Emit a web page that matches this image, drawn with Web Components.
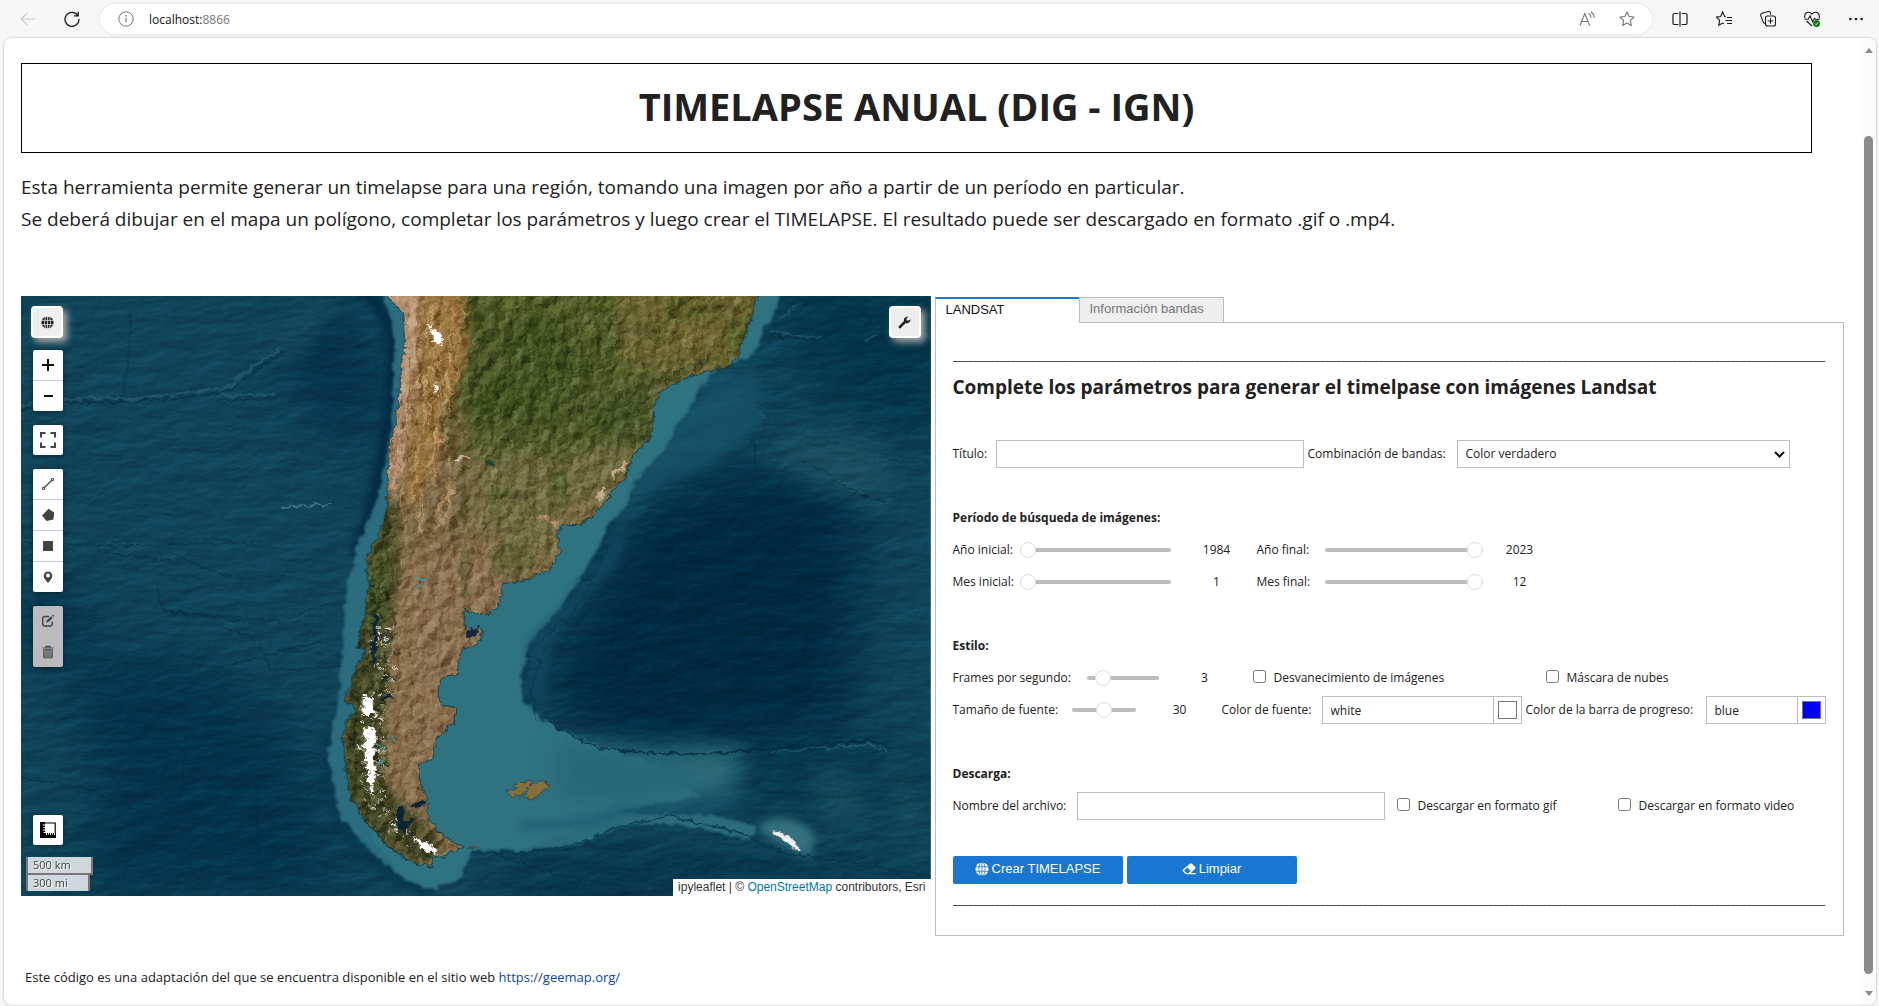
<!DOCTYPE html>
<html lang="es">
<head>
<meta charset="utf-8">
<title>Timelapse anual</title>
<style>
html,body{height:100%;margin:0}
body{background:#f7f7f7;font-family:"Open Sans","Noto Sans",sans-serif;font-size:12px;color:#212121;overflow:hidden}
</style>
</head>
<body>
<timelapse-app></timelapse-app>
<script>
const define = (name, html) => customElements.define(name, class extends HTMLElement {
  constructor() {
    super();
    this.attachShadow({ mode: "open" });
  }
  connectedCallback() {
    if (this.shadowRoot.childNodes.length) return;
    this.shadowRoot.innerHTML = "<style>*{box-sizing:border-box}:host{box-sizing:border-box}</style>" +
      (typeof html === "function" ? html(this) : html);
  }
});
const attr = (el, name, fallback = "") => el.getAttribute(name) ?? fallback;

/* ---------- icons ---------- */
const icons = {
  back: `<path d="M15 8H1.5M7.5 1.8 1.3 8l6.2 6.2" fill="none" stroke="currentColor" stroke-width="1.1"/>`,
  reload: `<path d="M13.6 4.2A7 7 0 1 0 15 8M14.2.8v4H10" fill="none" stroke="currentColor" stroke-width="1.3"/>`,
  info: `<circle cx="8" cy="8" r="7.2" fill="none" stroke="currentColor"/><path d="M8 7v4.6" stroke="currentColor" stroke-width="1.2"/><circle cx="8" cy="4.8" r=".9" fill="currentColor"/>`,
  aloud: `<path d="M1 14.5 5.8 2.5l4.8 12M2.8 10.5h6M9.5 2.2q2.4 1.7 2.6 4.6M11.8.7q3.2 2.1 3.4 6.1" fill="none" stroke="currentColor" stroke-width="1.1"/>`,
  star: `<path d="m8 1 2.1 4.5 4.9.6-3.6 3.4.9 4.9L8 12l-4.3 2.4.9-4.9L1 6.1l4.9-.6z" fill="none" stroke="currentColor" stroke-width="1.1" stroke-linejoin="round"/>`,
  split: `<path d="M6.3 2.5H2.6Q1 2.5 1 4.1v7.8q0 1.6 1.6 1.6h3.7M9.7 2.5h3.7Q15 2.5 15 4.1v7.8q0 1.6-1.6 1.6H9.7M8 .5v15" fill="none" stroke="currentColor" stroke-width="1.2"/>`,
  favs: `<path d="M10 5.8 8.7 5.600 6.7 1 4.600 5.500.4 6.100l3.200 3.100-.8 5.100 3.900-2.200 1.200.700M11 6.500h5M9.500 9.500H16M11 12.500h5" fill="none" stroke="currentColor" stroke-width="1.1"/>`,
  collections: `<path d="M5 12.500q-1.500-.3-1.900-1.600L.8 4.600Q.4 2.900 2 2.300L8.300.5q1.600-.3 2.100 1.200l.6 2" fill="none" stroke="currentColor" stroke-width="1.1"/><rect x="5.500" y="5" width="10" height="10" rx="2" fill="none" stroke="currentColor" stroke-width="1.1"/><path d="M10.500 7.200v5.600M7.700 10h5.600" stroke="currentColor"/>`,
  heart: `<path d="M1 7.200Q-.2 3.500 2.500 1.800 5.600.3 8 3.200 10.400.3 13.500 1.800 16.200 3.500 15 7.200M.500 8.300h3.700L6 4.800l2.500 6 2-3.500 1 1H16M2.500 10 8 15" fill="none" stroke="currentColor" stroke-width="1.1"/><circle cx="12.500" cy="12.500" r="3.500" fill="#107c10"/><path d="m11 12.600 1.100 1.100 2-2.200" fill="none" stroke="#fff" stroke-width=".9"/>`,
  dots: `<g fill="currentColor"><circle cx="2.400" cy="8" r="1.300"/><circle cx="8" cy="8" r="1.300"/><circle cx="13.600" cy="8" r="1.300"/></g>`,
  globe: `<circle cx="8" cy="8" r="7.500" fill="currentColor"/><g fill="none" stroke="var(--cut,#eee)" stroke-width=".9"><ellipse cx="8" cy="8" rx="3.600" ry="8"/><path d="M8 0v16M0 5.400h16M0 10.600h16"/></g>`,
  wrench: `<path d="M15.300 4.100a4.200 4.200 0 0 1-5.600 4.500l-6 6a1.700 1.700 0 0 1-2.500-2.400l6.200-5.900A4.200 4.200 0 0 1 12.600 1L10.300 3.300l.4 2 2.100.4z" fill="currentColor"/>`,
  plus: `<path d="M8 2v12M2 8h12" stroke="currentColor" stroke-width="2"/>`,
  minus: `<path d="M4 8h9" stroke="currentColor" stroke-width="2"/>`,
  full: `<path d="M1 5.500V1h4.500M10.500 1H15v4.500M15 10.500V15h-4.500M5.500 15H1v-4.500" fill="none" stroke="currentColor" stroke-width="2"/>`,
  line: `<path d="m4 12 8-8" stroke="currentColor" stroke-width="1.300"/><path d="M2.500 11.500h2v2h-2zM11.500 2.500h2v2h-2z" fill="#fff" stroke="currentColor"/>`,
  polygon: `<path d="m8.500 1.800 5.700 3.600-.8 7-6.900 1.700L2 8.500z" fill="currentColor"/>`,
  square: `<path d="M3 3h10v10H3z" fill="currentColor"/>`,
  marker: `<path d="M8 2.500a4.300 4.300 0 0 0-4.300 4.300C3.700 9.500 6 11.500 8 14c2-2.500 4.300-4.500 4.300-7.200A4.300 4.300 0 0 0 8 2.500z" fill="currentColor"/><circle cx="8" cy="6.500" r="1.900" fill="#fff"/>`,
  edit: `<path d="M9 3.500H5Q2.700 3.500 2.700 5.800v5Q2.700 13 5 13h5q2.300 0 2.300-2.300V8.500" fill="none" stroke="currentColor" stroke-width="1.400"/><path d="m6 9.900.7-2.500 4.300-4.200 1.700 1.700-4.300 4.200zM12 2.400l.9-.9 1.400 1.500-.9.900z" fill="currentColor"/>`,
  trash: `<path d="M2.500 4h11M6 3.700V2.300h4v1.400" stroke="currentColor" fill="none" stroke-width="1.200"/><path d="M3.500 5.500h9v8.500h-9z" fill="#777" stroke="#555" stroke-width=".8"/>`,
  ruler: `<path d="M0 0h5v11h11v5H0z" fill="currentColor"/><path d="M4.500 1h10.700v10.500" fill="none" stroke="currentColor" stroke-width="1.200"/><path d="M5 3H2.800M5 5.500H3.500M5 8H2.800M5 10.500H3.500M6.500 11v2M8.500 11v1.500M10.500 11v2M12.500 11v1.500M14.500 11v2" stroke="#fff" stroke-width="1"/>`,
  eraser: `<path fill-rule="evenodd" d="M9.200 1.800q.9-.8 1.800 0l4.200 3.900q.8.900 0 1.800L10 12.500h6V14H4.600L.9 10.500q-.8-.9 0-1.700zM6 6.400 2.400 9.700l2.900 2.800h2.400l2.100-2.200z" fill="currentColor"/>`
};
define("ui-icon", el => `<style>:host{display:block;flex:none;width:var(--icon,16px);height:var(--icon,16px)}svg{display:block;width:100%;height:100%}</style><svg viewBox="0 0 16 16" aria-hidden="true">${icons[attr(el, "name")]}</svg>`);

/* ---------- browser frame ---------- */
define("browser-bar", `<style>
:host{display:flex;align-items:center;height:38px;padding:0 15px 0 20px}
button{all:unset;display:flex;color:#1b1b1b}
button[disabled]{color:#c8c8c8}
.reload{margin:0 20px 0 28px}
.address{flex:1;display:flex;align-items:center;height:30px;border-radius:15px;background:#fff;padding:0 17px 0 18px;box-shadow:0 0 3px #0002;color:#777}
.url{flex:1;margin-left:15px}.url b{font-weight:400;color:#111}
.tools{display:flex;gap:24px;align-items:center}
.side{display:flex;gap:28px;margin-left:20px}
.address button{color:#777}
</style>
<button disabled aria-label="Atrás"><ui-icon name="back"></ui-icon></button>
<button class="reload" aria-label="Actualizar"><ui-icon name="reload"></ui-icon></button>
<div class="address"><ui-icon name="info"></ui-icon><span class="url"><b>localhost:</b>8866</span>
<div class="tools"><button aria-label="Leer en voz alta"><ui-icon name="aloud"></ui-icon></button><button aria-label="Favorito"><ui-icon name="star"></ui-icon></button></div></div>
<div class="side"><button aria-label="Pantalla dividida"><ui-icon name="split"></ui-icon></button><button aria-label="Favoritos"><ui-icon name="favs"></ui-icon></button><button aria-label="Colecciones"><ui-icon name="collections"></ui-icon></button><button aria-label="Rendimiento"><ui-icon name="heart"></ui-icon></button><button aria-label="Más"><ui-icon name="dots"></ui-icon></button></div>`);

define("page-scrollbar", `<style>
:host{display:flex;flex-direction:column;align-items:center;width:15px;flex:none;background:#fcfcfc;padding:10px 0 9px;border-radius:0 8px 8px 0}
i{width:0;height:0;border:4px solid transparent}
.up{border-bottom:5px solid #8b8b8b;border-top:0}.down{border-top:5px solid #8b8b8b;border-bottom:0}
.rail{flex:1;width:9px;padding:83px 0 17px;display:flex}
.thumb{flex:1;border-radius:5px;background:#8b8b8b}
</style><i class="up"></i><div class="rail"><div class="thumb"></div></div><i class="down"></i>`);

/* ---------- map ---------- */
const land = "M366-20V0L382 16 385 51 381 74 379 94 376 127 369 147 368 171 367 211 359 237 346 261 348 291 344 317 337 351 346 354 336 371 324 404 332 409 336 416 326 424 322 447 327 484 332 504 346 527 369 551 389 564 412 571 409 561 422 560 436 554 442 550 426 544 409 526 406 504 398 484 398 469 412 461 413 452 415 444 424 434 434 427 434 412 422 411 415 396 421 382 436 377 437 364 441 354 459 344 460 332 450 333 444 336 442 312 454 317 464 318 476 312 480 300 481 288 506 283 527 275 534 264 539 255 536 237 542 228 559 228 572 221 586 201 606 178 612 158 629 142 632 130 632 111 638 98 649 89 672 79 706 71 717 59 722 45 732 16 737 0V-20Z";
const shelfEast = "M725-20 759-20 759 0 754 15 752 24 742 30 738 50 729 63 705 68 679 91 668 115 655 130 648 150 619 178 606 209 590 225 572 261 539 312 506 352 501 380 501 403 522 423 540 434 566 445 640 470 680 500 600 515 556 548 500 556 472 553 450 556 440 580 432 585 412 594 379 581 350 540 380 300 520 180Z";
const shelfWest = "M355 -23 367 16 374 44 370 134 358 201 339 244 327 284 322 337 319 397 312 431 307 461 319 521 346 551 379 581 412 594 432 561 420 480 380 300 395 60 385 -23Z";
const spots = (n, seed, x, y, w, h, draw) => {
  let s = seed, out = "";
  const rnd = () => (s = (s * 16807) % 2147483647) / 2147483647;
  for (let i = 0; i < n; i++) out += draw(x + rnd() * w, y + rnd() * h, rnd(), rnd());
  return out;
};
const ridges = spots(80, 91, 0, 130, 300, 460, (x, y, a, b) => `M${x | 0} ${y | 0}q${6 + a * 14 | 0} ${b * 8 - 4 | 0} ${14 + a * 30 | 0} ${b * 12 - 9 | 0}`);
const ridgesEast = spots(50, 37, 740, 10, 165, 560, (x, y, a, b) => `M${x | 0} ${y | 0}q${6 + a * 14 | 0} ${b * 6 - 3 | 0} ${14 + a * 30 | 0} ${b * 6 - 3 | 0}`);
const andesAt = (x, y, a, b) => { const k = x - y * .1; return `M${k | 0} ${y | 0}q${b * 10 - 8 | 0} ${8 + a * 8 | 0} ${b * 8 - 6 | 0} ${18 + a * 18 | 0}`; };
const andes = spots(70, 77, 388, 0, 62, 210, andesAt);
const andesLight = spots(60, 19, 390, 0, 60, 210, andesAt);
const spine = y => y < 400 ? 362 : y < 500 ? 352 : 352 + (y - 500) * .7;
const dab = spread => (x, y, a, b) => `<circle cx="${(spine(y) + (a - .5) * spread) | 0}" cy="${y | 0}" r="${(.4 + b * .9).toFixed(1)}"/>`;
const snow = spots(220, 53, 0, 320, 1, 235, dab(24));
const forest = spots(420, 29, 0, 290, 1, 272, (x, y, a, b) => `<circle cx="${(spine(y) - 5 + (a - .5) * 38) | 0}" cy="${y | 0}" r="${(.8 + b * 1.8).toFixed(1)}"/>`);

define("satellite-image", `<style>:host{display:block;height:100%}svg{display:block;width:100%;height:100%}filter{color-interpolation-filters:sRGB}</style>
<svg viewBox="0 0 910 600" preserveAspectRatio="xMidYMid slice" role="img" aria-label="Imagen satelital del sur de Sudamérica">
<defs>
<clipPath id="land"><path d="${land}"/></clipPath>
<filter id="b1" x="-30%" y="-30%" width="160%" height="160%"><feGaussianBlur stdDeviation="1"/></filter>
<filter id="b5" x="-30%" y="-30%" width="160%" height="160%"><feGaussianBlur stdDeviation="4"/></filter>
<filter id="b14" x="-50%" y="-50%" width="200%" height="200%"><feGaussianBlur stdDeviation="12"/></filter>
<filter id="b30" x="-50%" y="-50%" width="200%" height="200%"><feGaussianBlur stdDeviation="26"/></filter>
<filter id="rough" x="-10%" y="-10%" width="120%" height="120%"><feTurbulence type="fractalNoise" baseFrequency=".12" numOctaves="3" seed="4"/><feDisplacementMap in="SourceGraphic" scale="8" xChannelSelector="R" yChannelSelector="G"/></filter>
<filter id="coast" x="-2%" y="-2%" width="104%" height="104%"><feTurbulence type="fractalNoise" baseFrequency=".15" numOctaves="3" seed="14"/><feDisplacementMap in="SourceGraphic" scale="7" xChannelSelector="R" yChannelSelector="G"/></filter>
<filter id="jag" x="-10%" y="-10%" width="120%" height="120%"><feTurbulence type="fractalNoise" baseFrequency=".3" numOctaves="2" seed="9"/><feDisplacementMap in="SourceGraphic" scale="9" xChannelSelector="R" yChannelSelector="G"/></filter>
<filter id="sea" x="0" y="0" width="100%" height="100%"><feTurbulence type="fractalNoise" baseFrequency=".025 .06" numOctaves="5" seed="12"/><feDiffuseLighting surfaceScale="1.500" lighting-color="#fff"><feDistantLight azimuth="225" elevation="30"/></feDiffuseLighting></filter>
<filter id="ground" x="0" y="0" width="100%" height="100%"><feTurbulence type="fractalNoise" baseFrequency=".09 .07" numOctaves="5" seed="21"/><feDiffuseLighting surfaceScale="2.500" lighting-color="#fff"><feDistantLight azimuth="225" elevation="30"/></feDiffuseLighting></filter>
<filter id="mottle" x="0" y="0" width="100%" height="100%"><feTurbulence type="fractalNoise" baseFrequency=".02 .024" numOctaves="5" seed="7"/><feColorMatrix values="0 0 0 0 .22  0 0 0 0 .30  0 0 0 0 .08  0 4 0 0 -1.800"/></filter>
</defs>
<rect width="910" height="600" fill="#0f4459"/>
<g filter="url(#b30)">
<path d="M40 370 160 360 260 420 290 500 330 600 60 600 80 480Z" fill="#013049" opacity=".85"/>
<path d="M260 20 350 30 355 160 290 120Z" fill="#033049"/>
<path d="M0 290 70 310 60 360 0 350Z" fill="#03314a"/>
<path d="M740-20H930V150L800 110Z" fill="#03354a"/>
<path d="M700 170 840 180 830 440 560 440 530 390 600 240Z" fill="#002c44"/>
<path d="M620 205 760 200 820 300 800 430 720 450 620 455 540 430 525 370 590 280Z" fill="#002a41"/>
<path d="M730 460 910 460 910 530 820 520 730 530Z" fill="#06394d"/>
<path d="M480 575 600 550 920 590 920 620 470 620Z" fill="#06344a"/>
</g>
<g filter="url(#b14)">
<path d="M740 160q60-45 120-10 25 35 0 60-60-10-120-50" fill="#1b5363" opacity=".8"/>
<path d="M795 465q40 10 60 60l-40 10q-25-30-20-70M860 460q40 20 45 90l-20-5Z" fill="#1a5262" opacity=".7"/>
<path d="M640 90 720 75 730 130 650 170 600 230 580 240Z" fill="#165065"/>
<path d="M235 50 300 0 320 0 270 60Z" fill="#1b5164" opacity=".7"/>
<path d="M560 450 720 455 710 500 620 515 540 530Z" fill="#236473"/>
</g>
<rect width="910" height="600" filter="url(#sea)" style="mix-blend-mode:soft-light" opacity=".55"/>
<g filter="url(#rough)" fill="none" stroke-linecap="round">
<path d="M0 110Q50 100 110 102L160 98 205 92 260 52M195 100 252 98M215 82q25-18 42-26" stroke="#2b6070" stroke-width="2" opacity=".7"/>
<path d="M0 114Q50 104 110 106L160 102 205 96 262 56M195 105 252 102" stroke="#03283a" stroke-width="1.500" opacity=".6"/>
<path d="M110 16 108 60 103 98M0 246 100 250 240 246M75 250 80 256 150 265M150 256 180 270 210 282M136 290 142 315 255 325 320 305M150 316 220 325M40 318 70 322M200 330 238 345 250 375 320 370M140 370 200 371 300 345M165 440 160 500M235 480 238 560M0 483 60 490 90 505M125 520 95 560" stroke="#03293d" stroke-width="1" opacity=".6"/>
<path d="M262 212 310 208" stroke="#3b7480" stroke-width="2"/>
<path d="${ridges}" stroke="#062f43" stroke-width="1" opacity=".4"/>
<path d="${ridgesEast}" stroke="#052e42" stroke-width="1" opacity=".4"/>
<path d="M750 38 770 42 800 44M820 187 840 199 865 205M780 165 810 178M705 124 728 120 745 108M733 140 735 175" stroke="#032d40" stroke-width="1" opacity=".8"/>
<path d="M750 35 770 39 800 41M845 44 855 40M818 185 842 198M730 110 745 122M760 22 778 8" stroke="#286270" stroke-width="1.500" opacity=".7"/>
</g>
<path d="M330-20Q366 14 372 40 374 90 364 150 352 220 334 260" fill="none" stroke="#022942" stroke-width="12" filter="url(#b5)"/>
<path d="M310 440Q308 520 345 560L412 600" fill="none" stroke="#04344b" stroke-width="15" filter="url(#b5)" opacity=".6"/>
<g filter="url(#b1)"><g filter="url(#rough)">
<path d="${shelfWest}" fill="#2b6c7e"/>
<path d="${shelfEast}" fill="#2f7280"/>
<path d="M500 556Q560 530 600 516L700 520 735 532 730 545Q660 522 600 530L556 550Z" fill="#2b6b7b"/>
</g></g>
<g filter="url(#b14)">
<path d="M540 445 620 462 715 458 695 495 600 505 540 500Z" fill="#266777"/>
<path d="M640 462 720 460 700 490Z" fill="#2f6b78"/>
</g>
<g filter="url(#b5)">
<path d="M500 529Q560 532 600 514L720 510" fill="none" stroke="#12506a" stroke-width="6" opacity=".7"/>
<path d="M745 525q30-10 50 15l-5 22q-30-10-55-30Z" fill="#34707d"/>
<path d="M508 345 545 308 580 262 606 222 600 262 560 310 530 350 524 410 508 405Z" fill="#124a60" opacity=".75"/>
<path d="M610 200 640 165 665 130 690 95 735 70 740 130 690 170Z" fill="#175166" opacity=".7"/>
</g>
<g fill="none" filter="url(#rough)">
<path d="M524 423Q560 450 600 455 680 462 740 453L850 445 870 452" stroke="#02273b" stroke-width="1.500" opacity=".8"/>
<path d="M750 456 850 448 865 456" stroke="#2b6873" stroke-width="1.500" opacity=".7"/>
<path d="M452 556Q550 562 590 532L650 520 720 537 760 557 800 562 870 572 905 602M480 560 540 580 600 590M640 570 700 560" stroke="#04344a" stroke-width="1.500" opacity=".8"/>
<path d="M505 380 510 355 545 320M508 400 520 360 560 305 590 245M515 425 510 390M504 360 520 365M508 372 526 372M540 325 556 322M560 285 575 280" stroke="#072f42" stroke-width="1" opacity=".6"/>
</g>
<g filter="url(#coast)">
<path d="${land}" fill="#1b3034" stroke="#153d46" stroke-width="2"/>
<g clip-path="url(#land)">
<path d="${land}" fill="#88704a"/>
<g filter="url(#b14)">
<path d="M440-30H770L720 80 640 90 630 150 540 160 450 180 440 120Z" fill="#57602a"/>
<path d="M445 30 530 10 580 60 560 130 450 160Z" fill="#465423"/>
<path d="M600-30 770-30 700 75 600 70Z" fill="#6e6531"/>
<path d="M570 100 640 80 640 150 580 160Z" fill="#47552a"/>
<path d="M455 150 610 150 600 200 540 220 540 260 480 280 450 220Z" fill="#6f6b3e"/>
<path d="M400 180 455 165 460 260 390 290Z" fill="#776541"/>
<path d="M372 270 470 240 520 290 450 340 410 560 370 400Z" fill="#8a6f50"/>
</g>
<g filter="url(#b5)">
<path d="M360-15 400-15 395 60 385 170 365 215 362 140Z" fill="#b89373"/>
<path d="M400-15 450-15 448 60 430 120 405 190 385 210 397 100Z" fill="#9a773f"/>
<path d="M446-10Q462 30 448 75L425 130 436 165" fill="none" stroke="#36491c" stroke-width="7"/>
<path d="M362 205 378 200 378 280 368 345 365 420 358 520 320 540 320 430 345 250Z" fill="#494a25"/>
<path d="M355 480 380 500 426 550 400 570 340 530Z" fill="#4b4b26"/>
<path d="M346 270 360 262 362 330 348 330Z" fill="#4f5e2d"/>
<path d="M376 500 400 500 406 522 385 512Z" fill="#8a7152"/>
</g>
<rect x="440" width="300" height="300" filter="url(#mottle)" opacity=".4"/>
<g filter="url(#jag)" fill="#2b371b" opacity=".75">${forest}</g>
<g filter="url(#rough)" fill="none">
<path d="${andes}" stroke="#6c4825" stroke-width="1.500" opacity=".55"/>
<path d="${andesLight}" stroke="#d4ad7d" stroke-width="1.500" opacity=".6"/>
<path d="M495 192 518 218 538 230M575 50 605 35 640 45M470 215 490 190M600 45 570 80M520 150 512 185" stroke="#384728" stroke-width="1.200" opacity=".6"/>
<path d="M516 219 526 222 538 230" stroke="#aa8862" stroke-width="4"/>
<path d="M465 166 474 169" stroke="#2a5943" stroke-width="6"/>
<path d="M435 165 447 160M592 182 606 167M578 203 585 192" stroke="#c6a98d" stroke-width="4"/>
<path d="M400 235 410 250M398 310 395 340M410 400 400 430M400 395 430 415M365 465 410 462M392 370 404 360M400 440 390 452" stroke="#a78765" stroke-width="1.500" opacity=".7"/>
<path d="M630 88 690 62M645 85 660 78" stroke="#37441f" stroke-width="3" opacity=".7"/>
</g>
<rect width="910" height="600" filter="url(#ground)" style="mix-blend-mode:soft-light" opacity=".8"/>
<g filter="url(#jag)" fill="#fff">
<path d="M343 400h9l1 20h-11ZM343 432h11l-1 25 2 20-4 24-6-32Z"/>
<path d="M405 24l8 10 8 4 1 10-9-2ZM413 88l6 4-3 8ZM391 541l12 4 14 8-2 4-14-4Z"/>
<g opacity=".8">${snow}</g>
</g>
<g fill="#0b2435"><path d="M353 318l4 2-3 50-3-4ZM357 403l10-4 7 3-8 1ZM377 512l6-2-1 16 12-4-6 8-4 8-7-6ZM390 508l14-4 2 6-14 2Z"/></g>
<path d="M355 448l9 5M356 467l8-1M371 441l3 4M395 281l11 4M396 292l5-4" stroke="#3f9ba1" stroke-width="2"/>
</g>
<path d="M445 339 450 334 457 332 457 338 450 343Z" fill="#14273a"/>
</g>
<g filter="url(#coast)" fill="#85703c" stroke="#2d4038" stroke-width=".8"><path d="M486 494l7 1 4-8 12-2 2 5-8 5-3 5-8 1ZM503 502l8-14 10-3 8 3-2 5-10 5-5 6Z"/><path d="M447 552l9-2 2 2Z"/></g>
<path d="M753 535l12 3 10 8 4 8-6-1-7-7-13-8Z" fill="#eee" filter="url(#coast)"/>
</svg>`);

define("map-group", el => `<style>
:host{display:flex;flex-direction:column;width:30px;border-radius:2px;overflow:hidden;background:${el.hasAttribute("off") ? "#bbb" : "#fff"};box-shadow:0 1px 5px #0006}
</style><slot></slot>`);
define("map-button", el => `<style>
:host{display:block}:host(:not(:last-child)){border-bottom:1px solid ${el.hasAttribute("off") ? "#bbb" : "#ccc"}}
button{display:flex;align-items:center;justify-content:center;width:30px;height:30px;padding:0;border:0;background:none;color:${attr(el, "tone", "#444")}}
</style><button aria-label="${attr(el, "label")}" ${el.hasAttribute("off") ? "disabled" : ""}><ui-icon name="${attr(el, "icon")}"></ui-icon></button>`);
define("tool-toggle", el => `<style>:host{display:block}
button{display:flex;align-items:center;justify-content:center;width:32px;height:32px;padding:0;border:2px solid #fff;border-radius:4px;background:#eee;color:#212121;box-shadow:4px 4px 7px #aaa}
ui-icon{--icon:13px}</style><button aria-label="${attr(el, "label")}"><ui-icon name="${attr(el, "icon")}"></ui-icon></button>`);

define("leaflet-map", `<style>
:host{display:block;position:relative;height:600px;flex:1;min-width:0;overflow:hidden}
.corner{position:absolute;display:flex;flex-direction:column;align-items:flex-start}
.tl{top:10px;left:10px;gap:12px}.tl map-group{margin-left:2px}.tl map-group+map-group{margin-top:2px}
.tr{top:10px;right:10px}.bl{left:5px;bottom:5px;gap:12px}.bl map-group{margin-left:7px}.br{right:0;bottom:0}
.scale div{width:67px;height:18px;padding:1px 5px;font:11px/14px "Open Sans","Noto Sans",sans-serif;color:#444;background:#fffc;border:2px solid #777;border-top:0;text-shadow:1px 1px #fff}
.scale div+div{width:64px;height:16px;border-bottom:0}
.credit{height:17px;background:#fff;padding:0 5px;font:12px/17px "Liberation Sans",Arial,sans-serif;color:#333;white-space:nowrap}
a{color:#0078a8;text-decoration:none}
</style>
<satellite-image></satellite-image>
<div class="corner tl"><tool-toggle icon="globe" label="Buscar"></tool-toggle>
<map-group><map-button icon="plus" label="Acercar" tone="#111"></map-button><map-button icon="minus" label="Alejar" tone="#111"></map-button></map-group>
<map-group><map-button icon="full" label="Pantalla completa"></map-button></map-group>
<map-group><map-button icon="line" label="Línea"></map-button><map-button icon="polygon" label="Polígono"></map-button><map-button icon="square" label="Rectángulo"></map-button><map-button icon="marker" label="Marcador"></map-button></map-group>
<map-group off><map-button off icon="edit" label="Editar"></map-button><map-button off icon="trash" label="Borrar"></map-button></map-group></div>
<div class="corner tr"><tool-toggle icon="wrench" label="Herramientas"></tool-toggle></div>
<div class="corner bl"><map-group><map-button icon="ruler" label="Medir" tone="#000"></map-button></map-group><div class="scale"><div>500 km</div><div>300 mi</div></div></div>
<div class="corner br"><div class="credit">ipyleaflet | © <a href="#osm">OpenStreetMap</a> contributors, Esri</div></div>`);

/* ---------- form widgets ---------- */
const field = `:host{display:flex;align-items:center;height:28px;font-size:12px;line-height:28px;white-space:nowrap}
label{flex:none;width:var(--label,auto)}
input,select{font:inherit;color:inherit;margin:0}
.box{width:var(--box,auto);min-width:0;height:28px;border:1px solid #bdbdbd;border-radius:0;background:#fff;padding:0 8px;outline:0;line-height:24px}`;
define("text-field", el => `<style>${field}</style><label for="f">${attr(el, "label")}</label><input id="f" class="box" type="text">`);
define("select-field", el => `<style>${field}
.wrap{display:grid;align-items:center;width:var(--box)}.wrap>*{grid-area:1/1}
select{appearance:none;width:100%}svg{justify-self:end;margin-right:5px;pointer-events:none}</style>
<label for="f">${attr(el, "label")}</label><span class="wrap"><select id="f" class="box"><option>${attr(el, "value")}</option></select><svg width="11" height="7" viewBox="0 0 11 7" aria-hidden="true"><path d="m1 1 4.500 4.500L10 1" fill="none" stroke="#111" stroke-width="2"/></svg></span>`);
define("range-field", el => `<style>${field}
input{appearance:none;flex:none;width:var(--track);height:16px;background:none}
input::-webkit-slider-runnable-track{height:4px;border-radius:2px;background:#bdbdbd}
input::-webkit-slider-thumb{appearance:none;width:16px;height:16px;margin-top:-6px;border:1px solid #ddd;border-radius:50%;background:#fff}
output{width:var(--readout,80px);margin-left:6px;text-align:center}</style>
<label for="f">${attr(el, "label")}</label><input id="f" type="range" min="${attr(el, "min")}" max="${attr(el, "max")}" value="${attr(el, "value")}"><output for="f">${attr(el, "value")}</output>`);
define("check-field", el => `<style>${field}:host{width:var(--cell,auto);padding-left:8px}input{width:13px;height:13px;margin:0 8px 3px 0}</style>
<input id="f" type="checkbox"><label for="f">${attr(el, "label")}</label>`);
define("color-field", el => `<style>${field}
.swatch{width:29px;height:28px;margin-left:-1px;border:1px solid #bdbdbd;background:#fff;padding:4px;flex:none}
.swatch::-webkit-color-swatch-wrapper{padding:0}.swatch::-webkit-color-swatch{border:1px solid #777;border-radius:0}</style>
<label for="f">${attr(el, "label")}</label><input id="f" class="box" type="text" value="${attr(el, "value")}"><input class="swatch" type="color" value="${attr(el, "hex")}" aria-label="${attr(el, "label")}">`);
define("action-button", el => `<style>:host{display:block;width:170px}
button{display:flex;align-items:center;justify-content:center;gap:3px;width:100%;height:28px;border:0;border-radius:2px;background:#1976d2;color:#fff;font:500 13px/28px "Liberation Sans",Arial,sans-serif;padding:0 10px 2px}
ui-icon{--icon:14px;--cut:#1976d2}</style><button><ui-icon name="${attr(el, "icon")}"></ui-icon><slot></slot></button>`);
define("form-row", `<style>:host{display:flex;align-items:center;gap:4px;height:32px;white-space:nowrap}</style><slot></slot>`);

define("tab-panel", `<style>
:host{display:block;flex:1;min-width:0;padding-top:1px}
.tabs{display:flex;height:26px;position:relative;z-index:1;margin-bottom:-1px}
.tabs button{width:145px;height:26px;padding:0 10px 2px;text-align:left;border:1px solid #bdbdbd;background:#eee;font:13px/20px "Liberation Sans",Arial,sans-serif;color:#777;margin-left:-1px}
.tabs button[aria-selected=true]{background:#fff;color:#111;border-top:2px solid #1976d2;border-bottom:0;border-right:0;margin:0}
.body{border:1px solid #bdbdbd;padding:19px 15px 17px 17px}
</style>
<div class="tabs" role="tablist"><button role="tab" aria-selected="true">LANDSAT</button><button role="tab" aria-selected="false">Información bandas</button></div>
<div class="body" role="tabpanel"><slot></slot></div>`);

define("landsat-form", `<style>
:host{display:block}
.rule{overflow:hidden;height:32px;line-height:28px;white-space:nowrap}
h2{margin:0 0 32px;font-size:19px;line-height:26px;height:32px;font-weight:700}
h3{margin:32px 0 0;font-size:12px;line-height:32px;font-weight:700}
.actions{margin-top:32px}
</style>
<div class="rule">${"_".repeat(166)}</div>
<h2>Complete los parámetros para generar el timelpase con imágenes Landsat</h2>
<form-row><text-field label="Título:" style="--label:43px;--box:308px"></text-field><select-field label="Combinación de bandas:" value="Color verdadero" style="--label:149px;--box:333px"></select-field></form-row>
<h3>Período de búsqueda de imágenes:</h3>
<form-row style="gap:0"><range-field label="Año inicial:" min="1984" max="2023" value="1984" style="--label:67px;--track:151px"></range-field><range-field label="Año final:" min="1984" max="2023" value="2023" style="--label:68px;--track:158px;--readout:62px"></range-field></form-row>
<form-row style="gap:0"><range-field label="Mes inicial:" min="1" max="12" value="1" style="--label:67px;--track:151px"></range-field><range-field label="Mes final:" min="1" max="12" value="12" style="--label:68px;--track:158px;--readout:62px"></range-field></form-row>
<h3>Estilo:</h3>
<form-row style="gap:0"><range-field label="Frames por segundo:" min="1" max="15" value="3" style="--label:134px;--track:72px"></range-field><check-field label="Desvanecimiento de imágenes" style="--cell:293px"></check-field><check-field label="Máscara de nubes"></check-field></form-row>
<form-row><range-field label="Tamaño de fuente:" min="10" max="50" value="30" style="--label:119px;--track:64px;--readout:76px"></range-field><color-field label="Color de fuente:" value="white" hex="#ffffff" style="--label:100px;--box:172px"></color-field><color-field label="Color de la barra de progreso:" value="blue" hex="#0000ff" style="--label:180px;--box:92px"></color-field></form-row>
<h3>Descarga:</h3>
<form-row><text-field label="Nombre del archivo:" style="--label:124px;--box:308px"></text-field><check-field label="Descargar en formato gif" style="--cell:217px"></check-field><check-field label="Descargar en formato video"></check-field></form-row>
<form-row class="actions"><action-button icon="globe">Crear TIMELAPSE</action-button><action-button icon="eraser">Limpiar</action-button></form-row>
<div class="rule">${"_".repeat(166)}</div>`);

define("title-banner", `<style>:host{display:block;border:1px solid #000;margin-right:32px;height:90px}
h1{margin:0;text-align:center;font-size:38px;line-height:84px;font-weight:700}</style><h1><slot></slot></h1>`);

define("timelapse-app", `<style>
:host{display:flex;flex-direction:column;height:100vh}
.page{flex:1;min-height:0;display:flex;margin:0 3px 1px 4px;background:#fff;border-radius:8px;box-shadow:0 0 2px 1px #0002}
main{flex:1;min-width:0;padding:25px 17px 0}
p{margin:18px 0 0;font-size:19px;line-height:32px}
.work{display:flex;gap:4px;align-items:flex-start;margin-top:61px}
footer{margin:31px 0 0 4px;font-size:13px;line-height:20px}
a{color:#0d47a1;text-decoration:none}
</style>
<browser-bar></browser-bar>
<div class="page"><main>
<title-banner>TIMELAPSE ANUAL (DIG - IGN)</title-banner>
<p>Esta herramienta permite generar un timelapse para una región, tomando una imagen por año a partir de un período en particular.<br>Se deberá dibujar en el mapa un polígono, completar los parámetros y luego crear el TIMELAPSE. El resultado puede ser descargado en formato .gif o .mp4.</p>
<div class="work"><leaflet-map></leaflet-map><tab-panel><landsat-form></landsat-form></tab-panel></div>
<footer>Este código es una adaptación del que se encuentra disponible en el sitio web <a href="https://geemap.org/">https://geemap.org/</a></footer>
</main><page-scrollbar></page-scrollbar></div>`);
</script>
</body>
</html>
